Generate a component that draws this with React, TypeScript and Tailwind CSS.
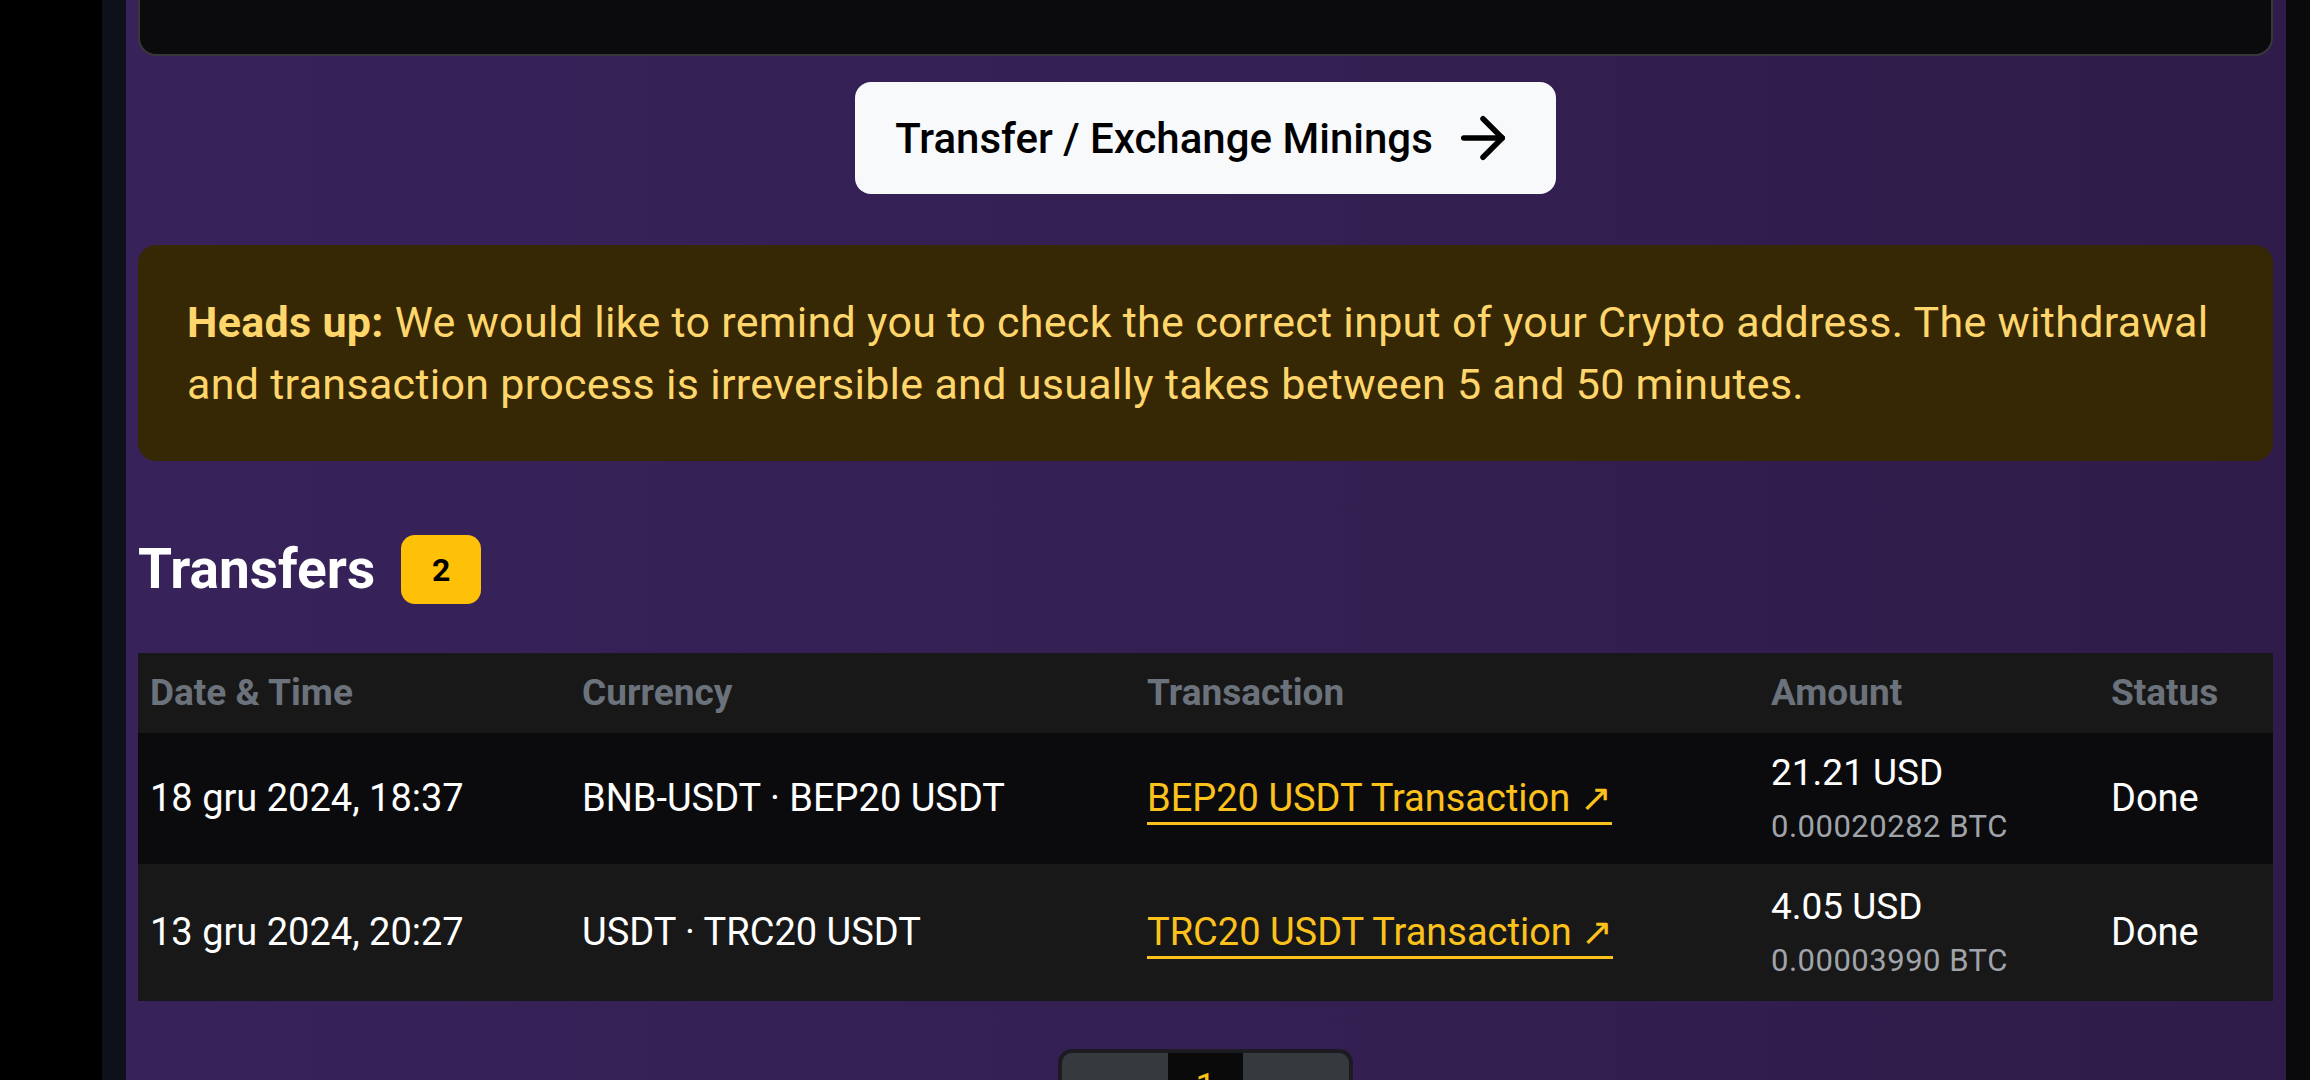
import React from 'react';
import { ArrowRight, ChevronLeft, ChevronRight } from 'lucide-react';

type Transfer = {
  date: string;
  currency: string;
  tx: string;
  usd: string;
  btc: string;
  status: string;
};

const TRANSFERS: Transfer[] = [
  { date: '18 gru 2024, 18:37', currency: 'BNB-USDT · BEP20 USDT', tx: 'BEP20 USDT Transaction', usd: '21.21 USD', btc: '0.00020282 BTC', status: 'Done' },
  { date: '13 gru 2024, 20:27', currency: 'USDT · TRC20 USDT', tx: 'TRC20 USDT Transaction', usd: '4.05 USD', btc: '0.00003990 BTC', status: 'Done' },
];

const FONT = { fontFamily: 'Roboto, "Noto Sans", sans-serif' };

const App: React.FC = () => {
  return (
    <div className="flex w-[2310px] h-[1080px] overflow-hidden bg-black" style={FONT}>
      <div className="w-[102px] shrink-0 bg-black" />
      <div className="w-[24px] shrink-0 bg-[#0e1119]" />

      <main className="flex-1 flex flex-col pl-[12px] pr-[13px] bg-linear-to-r from-[#37235a] to-[#301c4a]">
        {/* tail of the card above */}
        <div className="h-[56px] shrink-0 bg-[#0b0b0d] border-2 border-t-0 border-[#38383a] rounded-b-[18px]" />

        <div className="shrink-0 flex justify-center mt-[26px]">
          <button className="flex items-center gap-[17px] h-[112px] pl-[40px] pr-[40px] bg-[#f8f9fb] rounded-[16px] text-black text-[42px] font-medium">
            Transfer / Exchange Minings
            <ArrowRight size={66} strokeWidth={2} />
          </button>
        </div>

        <div className="shrink-0 mt-[51px] h-[216px] rounded-[18px] bg-[#362805] px-[49px] flex items-center">
          <p className="text-[43px] tracking-[0.3px] leading-[62px] text-[#ffd66b]">
            <b className="font-bold">Heads up:</b> We would like to remind you to check the correct input of your Crypto address. The withdrawal and transaction process is irreversible and usually takes between 5 and 50 minutes.
          </p>
        </div>

        <div className="shrink-0 mt-[74px] flex items-center gap-[26px] h-[69px]">
          <h2 className="text-[55px] font-bold text-white leading-none">Transfers</h2>
          <span className="w-[80px] h-[69px] rounded-[14px] bg-[#ffc107] flex items-center justify-center text-[32px] font-bold text-black">2</span>
        </div>

        <table className="shrink-0 mt-[49px] w-full table-fixed text-[38px] text-white">
          <thead>
            <tr className="bg-[#181818] h-[80px] text-[#6b727b] font-bold text-left text-[37px]">
              <th className="w-[432px] pl-[12px]">Date &amp; Time</th>
              <th className="w-[565px] pl-[12px]">Currency</th>
              <th className="w-[624px] pl-[12px]">Transaction</th>
              <th className="w-[340px] pl-[12px]">Amount</th>
              <th className="pl-[12px]">Status</th>
            </tr>
          </thead>
          <tbody>
            {TRANSFERS.map((t, i) => (
              <tr key={t.date} className={i === 0 ? 'bg-[#0b0b0d] h-[131px]' : 'bg-[#181818] h-[137px]'}>
                <td className="pl-[12px]">{t.date}</td>
                <td className="pl-[12px]">{t.currency}</td>
                <td className="pl-[12px]">
                  <a className="inline-block leading-none text-[#fcc21b] border-b-[3px] border-[#fcc21b] pt-[4px] pb-[5px]">
                    {t.tx} ↗
                  </a>
                </td>
                <td className="pl-[12px]">
                  <div className="leading-[48px] text-[37px]">{t.usd}</div>
                  <div className="text-[31px] tracking-[0.5px] leading-[44px] text-[#a0a4aa] mt-[8px]">{t.btc}</div>
                </td>
                <td className="pl-[12px]">{t.status}</td>
              </tr>
            ))}
          </tbody>
        </table>

        <div className="shrink-0 mt-[48px] flex justify-center">
          <div className="flex h-[100px] border-4 border-[#1d1b22] rounded-[14px] overflow-hidden">
            <div className="w-[106px] bg-[#363a3f] flex justify-center pt-[24px] text-[#9ca3af]">
              <ChevronLeft size={40} />
            </div>
            <div className="w-[75px] bg-[#0a0a0b] flex justify-center pt-[16px] leading-none text-[36px] text-[#fcc21b]">1</div>
            <div className="w-[106px] bg-[#363a3f] flex justify-center pt-[24px] text-[#9ca3af]">
              <ChevronRight size={40} />
            </div>
          </div>
        </div>
      </main>

      <div className="w-[24px] shrink-0 bg-[#0a0a0c]" />
    </div>
  );
};

export default App;
